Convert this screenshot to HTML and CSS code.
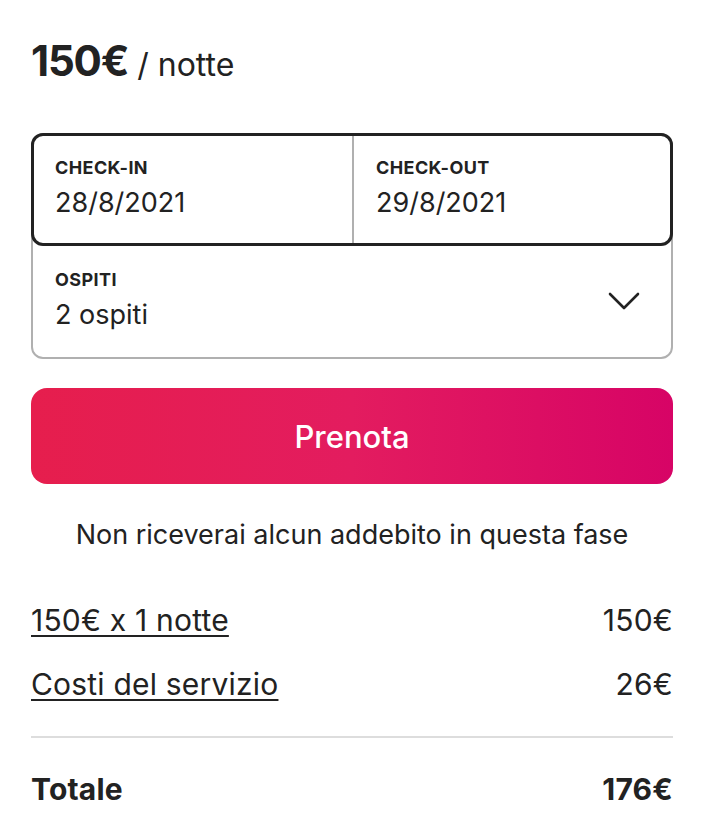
FILE: index.html
```html
<!DOCTYPE html>
<html lang="it">
<head>
<meta charset="utf-8">
<title>Prenota</title>
<link rel="stylesheet" href="styles.css">
</head>
<body>
<div class="card">
  <div class="price"><span class="amount">150€</span> <span class="per">/ notte</span></div>

  <div class="picker">
    <div class="dates">
      <div class="field">
        <div class="label">CHECK-IN</div>
        <div class="value">28/8/2021</div>
      </div>
      <div class="field field-right">
        <div class="label">CHECK-OUT</div>
        <div class="value">29/8/2021</div>
      </div>
    </div>
    <div class="guests">
      <div class="field">
        <div class="label">OSPITI</div>
        <div class="value">2 ospiti</div>
      </div>
      <svg class="chevron" viewBox="0 0 32 20" width="32" height="20" aria-hidden="true">
        <path d="M2 2 L16 16 L30 2" fill="none" stroke="#222" stroke-width="2.6" stroke-linecap="round" stroke-linejoin="round"/>
      </svg>
    </div>
  </div>

  <button class="book">Prenota</button>

  <p class="note">Non riceverai alcun addebito in questa fase</p>

  <div class="rows">
    <div class="row"><span class="link">150€ x 1 notte</span><span>150€</span></div>
    <div class="row"><span class="link">Costi del servizio</span><span>26€</span></div>
  </div>
  <div class="divider"></div>
  <div class="row total"><span>Totale</span><span>176€</span></div>
</div>
</body>
</html>
```

FILE: styles.css
```css
* { box-sizing: border-box; }
html, body { margin: 0; padding: 0; background: #fff; }
body {
  font-family: Inter, "Noto Sans", sans-serif;
  color: #222;
}
.card {
  padding: 35px 31px 0 31px;
  display: flex;
  flex-direction: column;
}
.price {
  height: 62px;
  display: flex;
  align-items: baseline;
  gap: 9px;
}
.amount {
  font-size: 42px;
  font-weight: 700;
  letter-spacing: -1.2px;
}
.per {
  font-size: 32px;
  font-weight: 400;
}
.picker {
  margin-top: 36px;
  border: 2px solid #b0b0b0;
  border-radius: 12px;
}
.dates {
  display: grid;
  grid-template-columns: 1fr 1fr;
  margin: -2px -2px 0 -2px;
  border: 3px solid #222;
  border-radius: 12px;
  height: 113px;
}
.field {
  padding: 21px 21px 0 21px;
}
.field-right {
  border-left: 2px solid #b0b0b0;
  padding-left: 22px;
}
.label {
  font-size: 18px;
  font-weight: 700;
  letter-spacing: 0.4px;
  line-height: 22px;
}
.value {
  font-size: 27px;
  line-height: 34px;
  margin-top: 7px;
}
.guests {
  height: 111px;
  display: flex;
  align-items: center;
  justify-content: space-between;
  padding-right: 31px;
}
.guests .field {
  padding: 0 0 0 22px;
  margin-top: -2px;
}
.chevron { display: block; margin-top: 0; }
.book {
  margin-top: 29px;
  height: 96px;
  border: 0;
  border-radius: 16px;
  background: linear-gradient(90deg, #e61e4d 0%, #e31c5f 50%, #d70466 100%);
  color: #fff;
  font-family: inherit;
  font-size: 31px;
  font-weight: 500;
}
.note {
  margin: 35px 0 0 0;
  text-align: center;
  font-size: 27px;
  line-height: 32px;
}
.rows {
  margin-top: 52px;
  display: flex;
  flex-direction: column;
  gap: 30px;
}
.row {
  display: flex;
  justify-content: space-between;
  font-size: 30px;
  line-height: 34px;
  letter-spacing: 0.2px;
}
.link {
  text-decoration: underline;
  text-decoration-thickness: 2px;
  text-underline-offset: 4px;
}
.divider {
  margin-top: 35px;
  border-top: 2px solid #ddd;
}
.total {
  margin-top: 34px;
  font-weight: 700;
}
```
